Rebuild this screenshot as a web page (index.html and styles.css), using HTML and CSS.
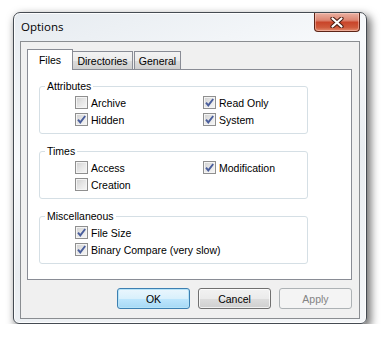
FILE: index.html
```html
<!DOCTYPE html>
<html lang="en">
<head>
  <meta charset="utf-8">
  <link rel="stylesheet" href="styles.css">
</head>
<body>

<div class="window">
  <div class="titlebar">
    <span class="title">Options</span>
    <div class="close-btn">
      <svg width="14" height="11" viewBox="0 0 14 11">
        <path d="M2.5 1.5 L11.5 9.5 M11.5 1.5 L2.5 9.5" stroke="#4a1c12" stroke-width="4.2" stroke-linecap="round"/>
        <path d="M2.5 1.5 L11.5 9.5 M11.5 1.5 L2.5 9.5" stroke="#fff" stroke-width="2.2" stroke-linecap="round"/>
      </svg>
    </div>
  </div>

  <div class="client">
    <div class="tabs">
      <div class="tab active">Files</div>
      <div class="tab dirs">Directories</div>
      <div class="tab gen">General</div>
    </div>

    <div class="panel">
      <fieldset class="group">
        <legend>Attributes</legend>
        <div class="opts">
          <div class="opt"><span class="box"></span>Archive</div>
          <div class="opt"><span class="box"><svg class="tick" width="11" height="11" viewBox="0 0 11 11"><path d="M2 5.6 L4.3 8.4 L9.2 2"/></svg></span>Read Only</div>
          <div class="opt"><span class="box"><svg class="tick" width="11" height="11" viewBox="0 0 11 11"><path d="M2 5.6 L4.3 8.4 L9.2 2"/></svg></span>Hidden</div>
          <div class="opt"><span class="box"><svg class="tick" width="11" height="11" viewBox="0 0 11 11"><path d="M2 5.6 L4.3 8.4 L9.2 2"/></svg></span>System</div>
        </div>
      </fieldset>

      <fieldset class="group">
        <legend>Times</legend>
        <div class="opts">
          <div class="opt"><span class="box"></span>Access</div>
          <div class="opt"><span class="box"><svg class="tick" width="11" height="11" viewBox="0 0 11 11"><path d="M2 5.6 L4.3 8.4 L9.2 2"/></svg></span>Modification</div>
          <div class="opt"><span class="box"></span>Creation</div>
        </div>
      </fieldset>

      <fieldset class="group">
        <legend>Miscellaneous</legend>
        <div class="opts single">
          <div class="opt"><span class="box"><svg class="tick" width="11" height="11" viewBox="0 0 11 11"><path d="M2 5.6 L4.3 8.4 L9.2 2"/></svg></span>File Size</div>
          <div class="opt"><span class="box"><svg class="tick" width="11" height="11" viewBox="0 0 11 11"><path d="M2 5.6 L4.3 8.4 L9.2 2"/></svg></span>Binary Compare (very slow)</div>
        </div>
      </fieldset>
    </div>

    <div class="buttons">
      <button class="btn default">OK</button>
      <button class="btn">Cancel</button>
      <button class="btn" disabled>Apply</button>
    </div>
  </div>
</div>

</body>
</html>
```

FILE: styles.css
```css
body {
  margin: 0;
  background: #fff;
  font-family: "Liberation Sans", Arial, sans-serif;
  font-size: 10.5px;
  color: #000;
  }

.window {
  box-sizing: border-box;
  width: 354px;
  height: 312px;
  margin: 12px 0 0 13px;
  padding: 0 6px 4px 6px;
  display: flex;
  flex-direction: column;
  border: 1px solid #454b52;
  border-radius: 7px 7px 6px 6px;
  background: linear-gradient(160deg, #e6ebf0 0%, #f8fafc 35%, #e9edf1 60%, #f5f7f9 100%);
  box-shadow: inset 0 0 0 1px rgba(255,255,255,0.85), 3px 4px 9px 1px rgba(0,0,0,0.55);
  }

.titlebar {
  height: 28px;
  display: flex;
  align-items: flex-start;
  }

.title {
  font-family: "Open Sans", sans-serif;
  font-size: 11.5px;
  line-height: 28px;
  padding-left: 1px;
  color: #000;
  }

.close-btn {
  margin-left: auto;
  box-sizing: border-box;
  width: 46px;
  height: 19px;
  display: flex;
  justify-content: center;
  align-items: center;
  border: 1px solid #5c2417;
  border-top: none;
  border-radius: 0 0 4px 4px;
  background: linear-gradient(#eab0a2 0%, #dd8672 40%, #c9452a 52%, #cf5a3c 80%, #e48d70 100%);
  box-shadow: inset 0 0 0 1px rgba(255,220,210,0.45);
  }

.client {
  box-sizing: border-box;
  height: 278px;
  border: 1px solid #8a8d91;
  background: #f0f0f0;
  padding: 7px 7px 9px 6px;
  display: flex;
  flex-direction: column;
  }

.tabs {
  display: flex;
  height: 20px;
  align-items: flex-end;
  }

.tab {
  box-sizing: border-box;
  height: 18px;
  display: flex;
  justify-content: center;
  align-items: center;
  border: 1px solid #898c95;
  border-bottom: none;
  background: linear-gradient(#f3f3f3 0%, #ebebeb 50%, #dddddd 51%, #cfcfcf 100%);
  }

.tab.active {
  position: relative;
  z-index: 1;
  width: 46px;
  height: 21px;
  margin-bottom: -1px;
  background: #fff;
  padding-bottom: 1px;
  }

.tab.dirs {
  width: 61px;
  margin-left: -1px;
  }

.tab.gen {
  width: 47px;
  margin-left: 1px;
  }

.panel {
  box-sizing: border-box;
  height: 211px;
  border: 1px solid #898c95;
  background: #fff;
  padding-top: 10px;
  }

.group {
  box-sizing: border-box;
  width: 269px;
  min-width: 0;
  margin: 0 0 11px 11px;
  padding: 0;
  border: 1px solid #d5dfe5;
  border-radius: 3px;
  }

.group legend {
  margin-left: 5px;
  padding: 0 2px;
  line-height: 13px;
  }

.opts {
  display: grid;
  grid-template-columns: 128px 1fr;
  grid-auto-rows: 17px;
  padding: 1px 0 5px 35px;
  }

.opts.single {
  grid-template-columns: 1fr;
  }

.opt {
  display: flex;
  align-items: center;
  white-space: nowrap;
  }

.box {
  box-sizing: border-box;
  width: 13px;
  height: 13px;
  margin-right: 3px;
  border: 1px solid #8f8f8f;
  background: linear-gradient(135deg, #cfcfcf 0%, #e6e6e6 50%, #f7f7f7 100%);
  box-shadow: inset 0 0 0 1px #f4f4f4;
  }

.tick {
  display: block;
  fill: none;
  stroke: #4a5e9c;
  stroke-width: 1.9;
  }

.buttons {
  display: flex;
  justify-content: flex-end;
  gap: 8px;
  margin-top: 8px;
  }

.btn {
  box-sizing: border-box;
  width: 73px;
  height: 21px;
  padding: 0;
  font-family: "Liberation Sans", Arial, sans-serif;
  font-size: 10.5px;
  color: #000;
  border: 1px solid #707070;
  border-radius: 3px;
  background: linear-gradient(#f2f2f2 0%, #ebebeb 50%, #dddddd 51%, #cfcfcf 100%);
  box-shadow: inset 0 0 0 1px rgba(255,255,255,0.7);
  }

.btn.default {
  border-color: #3c7fb1;
  background: linear-gradient(#eaf6fd 0%, #d9f0fc 50%, #bee6fd 51%, #a7d9f5 100%);
  box-shadow: inset 0 0 0 1px #b6e3f8;
  }

.btn:disabled {
  border-color: #adb2b5;
  background: #f4f4f4;
  color: #838383;
  box-shadow: none;
  }
```
